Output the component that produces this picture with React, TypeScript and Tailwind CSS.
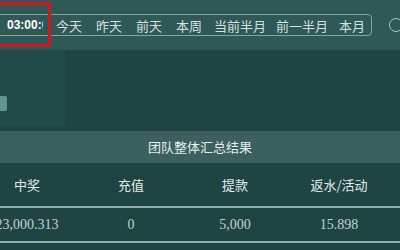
import React from 'react'

const quick = [
  { label: '今天', cls: 'ml-[13px]' },
  { label: '昨天', cls: 'ml-[14px]' },
  { label: '前天', cls: 'ml-[14px]' },
  { label: '本周', cls: 'ml-[14px]' },
  { label: '当前半月', cls: 'ml-[12px]' },
  { label: '前一半月', cls: 'ml-[10px]' },
  { label: '本月', cls: 'ml-[11px]' },
]

const heads = ['中奖', '充值', '提款', '返水/活动']
const values = ['23,000.313', '0', '5,000', '15.898']

export default function App() {
  return (
    <div className="relative h-[250px] w-[400px] overflow-hidden bg-[#1f4543] font-['Noto_Sans_CJK_SC',sans-serif] text-[#dfe8e6]">
      {/* filter bar */}
      <div className="flex h-[50px] items-center bg-[#2f5956]">
        <div className="ml-[-10px] flex h-[22px] w-[382px] shrink-0 items-center rounded-[4px] border border-[#86a5a1]">
          <div className="w-[52px] shrink-0 overflow-hidden whitespace-nowrap pl-[16px] font-['Liberation_Sans',sans-serif] text-[12px] font-bold text-white">
            03:00:00
          </div>
          {quick.map((q) => (
            <span key={q.label} className={`${q.cls} shrink-0 text-[13px] leading-none text-[#d6e0de]`}>
              {q.label}
            </span>
          ))}
        </div>
        <div className="ml-[17px] h-[14px] w-[14px] shrink-0 rounded-full border-[1.5px] border-[#b3c6c3]" />
      </div>

      {/* red highlight annotation */}
      <div className="absolute left-[-4px] top-[2px] h-[45px] w-[55px] border-[3px] border-[#d3151d]" />

      {/* empty area */}
      <div className="flex h-[81px]">
        <div className="flex h-[76px] w-[65px] items-end bg-[#224a48] pb-[15px]">
          <div className="h-[15px] w-[7px] rounded-r-[2px] bg-[#8ccbc7]/60" />
        </div>
      </div>

      {/* summary */}
      <div className="flex h-[32px] items-center justify-center bg-[#3b605d] text-[13px] text-[#e6eeec]">
        团队整体汇总结果
      </div>
      <div className="ml-[-25px] w-[440px]">
        <div className="grid h-[45px] grid-cols-[repeat(4,104px)] items-center border-b-2 border-[#8fb0ac] text-[13px] text-[#e3ebe9]">
          {heads.map((h) => (
            <div key={h} className="text-center">{h}</div>
          ))}
        </div>
        <div className="grid h-[35px] grid-cols-[repeat(4,104px)] items-center border-b-2 border-[#8fb0ac] font-['Liberation_Serif',serif] text-[14px] text-[#c3d2cf]">
          {values.map((v) => (
            <div key={v} className="text-center">{v}</div>
          ))}
        </div>
      </div>
    </div>
  )
}
